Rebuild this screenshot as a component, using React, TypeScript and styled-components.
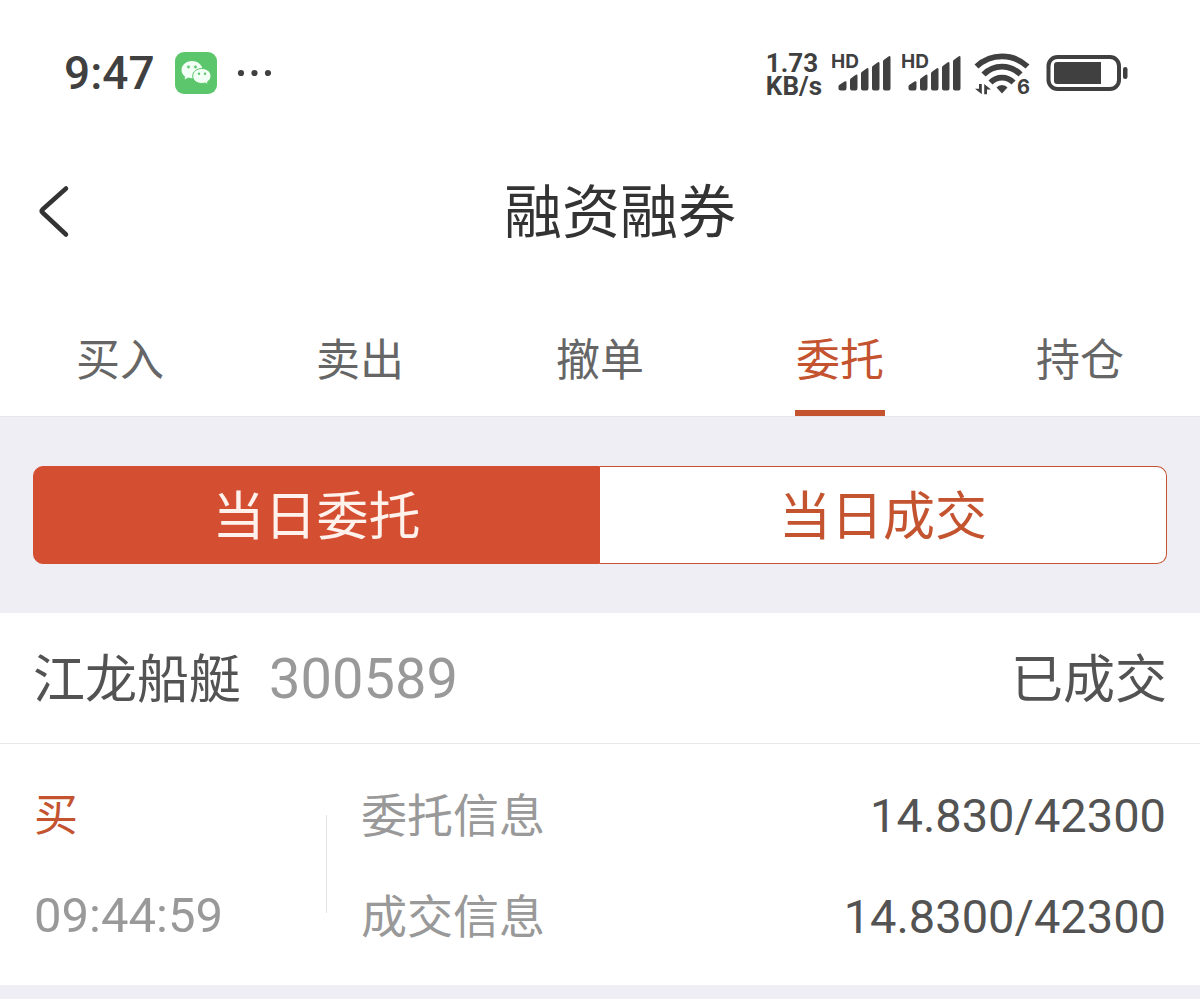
import React, { useState } from "react";
import styled, { createGlobalStyle } from "styled-components";

const ink = "#404040";
const accent = "#c4532f";
const numeric = "Roboto, sans-serif";

const GlobalStyle = createGlobalStyle`
  * { box-sizing: border-box; }
  body {
    margin: 0;
    background: #efeef4;
    color: #535353;
    font-family: Lato, "Noto Sans CJK SC", sans-serif;
  }
  button { font: inherit; border: 0; padding: 0; background: none; cursor: pointer; }
  h1, h2, dl, dd, dt, p { margin: 0; font-weight: 400; }
`;

const Top = styled.div`
  background: #fff;
  border-bottom: 1px solid #e6e6ea;
`;

const StatusBar = styled.div`
  display: flex;
  justify-content: space-between;
  align-items: center;
  height: 146px;
  padding: 0 72px 0 64px;
  color: ${ink};
`;

const StatusGroup = styled.div<{ $gap: number }>`
  display: flex;
  align-items: center;
  gap: ${(p) => p.$gap}px;
`;

const Clock = styled.time`
  font-family: ${numeric};
  font-size: 46px;
  font-weight: 500;
  line-height: 56px;
`;

const Speed = styled.div`
  padding-top: 3px;
  font-family: ${numeric};
  font-size: 26px;
  font-weight: 700;
  line-height: 23px;
`;

const Header = styled.header`
  display: grid;
  grid-template-columns: 100px 1fr 76px;
  align-items: center;
  height: 130px;
  margin-bottom: 28px;
  padding: 0 20px 0 36px;
`;

const BackButton = styled.button`
  display: flex;
  width: 60px;
  height: 60px;
  align-items: center;
`;

const Title = styled.h1`
  color: #333;
  font-size: 58px;
  line-height: 80px;
  text-align: center;
`;

const Tabs = styled.nav`
  display: grid;
  grid-template-columns: repeat(5, 1fr);
  height: 112px;
  padding-top: 4px;
`;

const Tab = styled.button<{ $active: boolean }>`
  display: flex;
  justify-content: center;
  color: ${(p) => (p.$active ? accent : "#666")};
  font-size: 44px;
  line-height: 102px;

  span {
    width: 90px;
    border-bottom: 6px solid ${(p) => (p.$active ? accent : "transparent")};
  }
`;

const SegmentArea = styled.div`
  padding: 49px 33px;
`;

const Segments = styled.div`
  display: grid;
  grid-template-columns: 1fr 1fr;
  height: 98px;
`;

const Segment = styled.button<{ $active: boolean }>`
  border: 1px solid ${(p) => (p.$active ? "#d44f32" : accent)};
  background: ${(p) => (p.$active ? "#d44f32" : "#fff")};
  color: ${(p) => (p.$active ? "#fff1ec" : accent)};
  font-size: 52px;
  line-height: 96px;

  &:first-child {
    border-radius: 10px 0 0 10px;
  }

  &:last-child {
    border-left-width: 0;
    border-radius: 0 10px 10px 0;
  }
`;

const Order = styled.article`
  background: #fff;
`;

const OrderHead = styled.div`
  display: flex;
  align-items: baseline;
  gap: 28px;
  height: 131px;
  padding: 0 33px;
  border-bottom: 1px solid #e8e8e8;
  font-size: 52px;
  line-height: 130px;
`;

const StockName = styled.h2`
  font-size: 52px;
`;

const StockCode = styled.span`
  color: #999;
  font-family: ${numeric};
  font-size: 56px;
`;

const OrderState = styled.span`
  margin-left: auto;
`;

const OrderBody = styled.div`
  display: flex;
  padding: 20px 34px 19px;
  line-height: 101px;
`;

const Side = styled.div`
  flex: 0 0 292px;
`;

const Direction = styled.p`
  color: ${accent};
  font-size: 44px;
`;

const Time = styled.time`
  display: block;
  color: #999;
  font-family: ${numeric};
  font-size: 49px;
`;

const Divider = styled.div`
  width: 1px;
  height: 98px;
  margin: 51px 34px 0 0;
  background: #e4e4e4;
`;

const Details = styled.dl`
  flex: 1;
`;

const Detail = styled.div`
  display: flex;
  align-items: baseline;
  justify-content: space-between;
  height: 101px;

  dt { color: #999; font-size: 46px; }
  dd { font-family: ${numeric}; font-size: 47px; }
`;

const WeChatIcon = () => (
  <svg width="42" height="42" viewBox="0 0 42 42" aria-label="微信">
    <rect width="42" height="42" rx="9" fill="#5cc66d" />
    <path d="M17 9C11 9 6.500 13 6.500 18c0 2.800 1.400 5.100 3.600 6.700L9.600 27.500l3.600-1.900c1.200.4 2.400.6 3.800.6 6 0 10.500-3.700 10.500-8.400S23 9 17 9Z" fill="#f2fff5" />
    <path d="M26.800 16.500c-5.100 0-9.100 3.200-9.100 7.500s4 7.500 9.100 7.500c1.100 0 2.200-.2 3.200-.5l3 1.500-.6-2.600c2.200-1.400 3.600-3.500 3.600-5.900 0-4.300-4.100-7.500-9.200-7.500Z" fill="#f2fff5" stroke="#5cc66d" strokeWidth="1" />
    <g fill="#5cc66d">
      <circle cx="13.500" cy="15" r="1.400" />
      <circle cx="20.500" cy="15" r="1.400" />
      <circle cx="24" cy="21.800" r="1.200" />
      <circle cx="30" cy="21.800" r="1.200" />
    </g>
  </svg>
);

const MoreIcon = () => (
  <svg width="34" height="8" viewBox="0 0 34 8" fill={ink} aria-hidden="true">
    <circle cx="4" cy="4" r="3.100" />
    <circle cx="17.500" cy="4" r="3.100" />
    <circle cx="31" cy="4" r="3.100" />
  </svg>
);

const SignalIcon = () => (
  <svg width="60" height="52" viewBox="0 -6 60 52" fill={ink} aria-label="HD">
    <text x="-1" y="15" fontFamily="Inter, sans-serif" fontWeight="700" fontSize="19">HD</text>
    <path d="M6.500 33.500q0-1 1-1.700l5-3.200q2-1.100 2 1V35q0 2.500-2 2.500H8.500q-2 0-2-2z" />
    <path d="M18 27q0-1 1-1.700l4.500-3.300q2-1.100 2 1v12q0 2.500-2 2.500H20q-2 0-2-2z" />
    <path d="M29 20.500q0-1 1-1.700l4.500-3.300q2-1.100 2 1V35q0 2.500-2 2.500H31q-2 0-2-2z" />
    <path d="M40 14.500q0-1 1-1.700l4.500-3.300q2-1.100 2 1v25q0 2-2 2H42q-2 0-2-2z" />
    <path d="M51 8.500q0-1 1-1.700l4.500-3.300q2-1.100 2 1v31q0 2-2 2H53q-2 0-2-2z" />
  </svg>
);

const WifiIcon = () => (
  <svg width="64" height="54" viewBox="-2 -6 64 54" fill={ink} aria-label="Wi-Fi 6">
    <g fill="none" stroke={ink} strokeWidth="5.800">
      <path d="M2.500 14.500C17 1 39 1 53.500 14.500" />
      <path d="M9.500 22.500C20 12 36 12 46.500 22.500" />
      <path d="M16.500 30.500C23 24 33 24 39.500 30.500" />
    </g>
    <path d="M28 33q3.600 0 5.500 2.600L28 41.500l-5.500-5.900q1.900-2.600 5.500-2.600Z" />
    <path d="M7.800 32v10.200L1 36.800h4V32ZM10.200 42.200V32l6.800 5.400h-4v4.800Z" />
    <text x="43" y="42" fontFamily="Inter, sans-serif" fontWeight="700" fontSize="20">6</text>
  </svg>
);

const BatteryIcon = () => (
  <svg width="82" height="38" viewBox="0 0 82 38" aria-label="电量">
    <rect x="2.500" y="3" width="70.500" height="32" rx="9" fill="none" stroke={ink} strokeWidth="4" />
    <path d="M11 8h44v22H11q-3 0-3-3V11q0-3 3-3Z" fill={ink} />
    <rect x="77" y="13" width="4.500" height="12" rx="2.200" fill={ink} />
  </svg>
);

const tabs = ["买入", "卖出", "撤单", "委托", "持仓"];
const segments = ["当日委托", "当日成交"];

export default function App() {
  const [tab, setTab] = useState("委托");
  const [segment, setSegment] = useState("当日委托");

  return (
    <>
      <GlobalStyle />
      <Top>
        <StatusBar>
          <StatusGroup $gap={20}>
            <Clock>9:47</Clock>
            <WeChatIcon />
            <MoreIcon />
          </StatusGroup>
          <StatusGroup $gap={10}>
            <Speed>
              1.73
              <br />
              KB/s
            </Speed>
            <SignalIcon />
            <SignalIcon />
            <WifiIcon />
            <BatteryIcon />
          </StatusGroup>
        </StatusBar>
        <Header>
          <BackButton aria-label="返回">
            <svg width="36" height="54" viewBox="0 0 36 54" fill="none" stroke="#333" strokeWidth="4.500" strokeLinecap="round" strokeLinejoin="round">
              <path d="M30 4.500L6.500 25.500Q5 27 6.500 28.500L30 50.500" />
            </svg>
          </BackButton>
          <Title>融资融券</Title>
        </Header>
        <Tabs>
          {tabs.map((name) => (
            <Tab key={name} $active={name === tab} onClick={() => setTab(name)}>
              <span>{name}</span>
            </Tab>
          ))}
        </Tabs>
      </Top>
      <main>
        <SegmentArea>
          <Segments>
            {segments.map((name) => (
              <Segment key={name} $active={name === segment} onClick={() => setSegment(name)}>
                {name}
              </Segment>
            ))}
          </Segments>
        </SegmentArea>
        <Order>
          <OrderHead>
            <StockName>江龙船艇</StockName>
            <StockCode>300589</StockCode>
            <OrderState>已成交</OrderState>
          </OrderHead>
          <OrderBody>
            <Side>
              <Direction>买</Direction>
              <Time>09:44:59</Time>
            </Side>
            <Divider />
            <Details>
              <Detail>
                <dt>委托信息</dt>
                <dd>14.830/42300</dd>
              </Detail>
              <Detail>
                <dt>成交信息</dt>
                <dd>14.8300/42300</dd>
              </Detail>
            </Details>
          </OrderBody>
        </Order>
      </main>
    </>
  );
}
